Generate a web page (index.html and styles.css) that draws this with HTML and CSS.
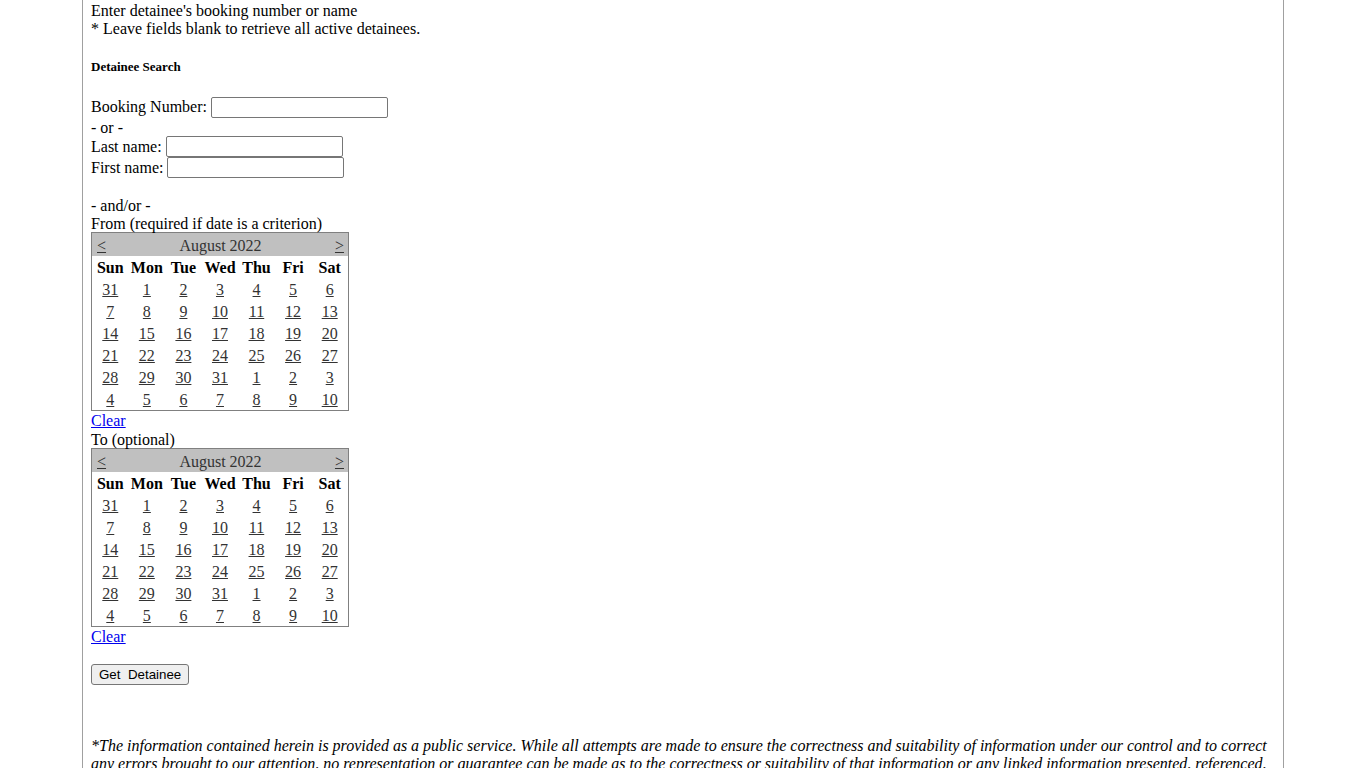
FILE: index.html
```html
<!DOCTYPE html>
<html>
<head>
<meta charset="utf-8">
<title>Detainee Search</title>
<link rel="stylesheet" href="styles.css">
</head>
<body>
<div class="page">
  <div class="intro">
    <div class="line">Enter detainee's booking number or name</div>
    <div class="line">* Leave fields blank to retrieve all active detainees.</div>
  </div>
  <h5 class="title">Detainee Search</h5>
  <form class="search">
    <div class="row row-booking">Booking Number:&nbsp;<input type="text" class="field"></div>
    <div class="line">- or -</div>
    <div class="row">Last name:&nbsp;<input type="text" class="field"></div>
    <div class="row">First name:&nbsp;<input type="text" class="field"></div>
    <div class="line"></div>
    <div class="line">- and/or -</div>
    <div class="line">From (required if date is a criterion)</div>
    <table class="cal">
      <tr class="cal-head"><td colspan="7"><div class="cal-nav"><a href="#">&lt;</a><span>August 2022</span><a href="#">&gt;</a></div></td></tr>
      <tr class="cal-days"><th>Sun</th><th>Mon</th><th>Tue</th><th>Wed</th><th>Thu</th><th>Fri</th><th>Sat</th></tr>
      <tr><td><a href="#">31</a></td><td><a href="#">1</a></td><td><a href="#">2</a></td><td><a href="#">3</a></td><td><a href="#">4</a></td><td><a href="#">5</a></td><td><a href="#">6</a></td></tr>
      <tr><td><a href="#">7</a></td><td><a href="#">8</a></td><td><a href="#">9</a></td><td><a href="#">10</a></td><td><a href="#">11</a></td><td><a href="#">12</a></td><td><a href="#">13</a></td></tr>
      <tr><td><a href="#">14</a></td><td><a href="#">15</a></td><td><a href="#">16</a></td><td><a href="#">17</a></td><td><a href="#">18</a></td><td><a href="#">19</a></td><td><a href="#">20</a></td></tr>
      <tr><td><a href="#">21</a></td><td><a href="#">22</a></td><td><a href="#">23</a></td><td><a href="#">24</a></td><td><a href="#">25</a></td><td><a href="#">26</a></td><td><a href="#">27</a></td></tr>
      <tr><td><a href="#">28</a></td><td><a href="#">29</a></td><td><a href="#">30</a></td><td><a href="#">31</a></td><td><a href="#">1</a></td><td><a href="#">2</a></td><td><a href="#">3</a></td></tr>
      <tr><td><a href="#">4</a></td><td><a href="#">5</a></td><td><a href="#">6</a></td><td><a href="#">7</a></td><td><a href="#">8</a></td><td><a href="#">9</a></td><td><a href="#">10</a></td></tr>
    </table>
    <div class="line"><a href="#" class="clear">Clear</a></div>
    <div class="line line-to">To (optional)</div>
    <table class="cal">
      <tr class="cal-head"><td colspan="7"><div class="cal-nav"><a href="#">&lt;</a><span>August 2022</span><a href="#">&gt;</a></div></td></tr>
      <tr class="cal-days"><th>Sun</th><th>Mon</th><th>Tue</th><th>Wed</th><th>Thu</th><th>Fri</th><th>Sat</th></tr>
      <tr><td><a href="#">31</a></td><td><a href="#">1</a></td><td><a href="#">2</a></td><td><a href="#">3</a></td><td><a href="#">4</a></td><td><a href="#">5</a></td><td><a href="#">6</a></td></tr>
      <tr><td><a href="#">7</a></td><td><a href="#">8</a></td><td><a href="#">9</a></td><td><a href="#">10</a></td><td><a href="#">11</a></td><td><a href="#">12</a></td><td><a href="#">13</a></td></tr>
      <tr><td><a href="#">14</a></td><td><a href="#">15</a></td><td><a href="#">16</a></td><td><a href="#">17</a></td><td><a href="#">18</a></td><td><a href="#">19</a></td><td><a href="#">20</a></td></tr>
      <tr><td><a href="#">21</a></td><td><a href="#">22</a></td><td><a href="#">23</a></td><td><a href="#">24</a></td><td><a href="#">25</a></td><td><a href="#">26</a></td><td><a href="#">27</a></td></tr>
      <tr><td><a href="#">28</a></td><td><a href="#">29</a></td><td><a href="#">30</a></td><td><a href="#">31</a></td><td><a href="#">1</a></td><td><a href="#">2</a></td><td><a href="#">3</a></td></tr>
      <tr><td><a href="#">4</a></td><td><a href="#">5</a></td><td><a href="#">6</a></td><td><a href="#">7</a></td><td><a href="#">8</a></td><td><a href="#">9</a></td><td><a href="#">10</a></td></tr>
    </table>
    <div class="line"><a href="#" class="clear">Clear</a></div>
    <div class="actions"><button type="button" class="btn">Get&nbsp; Detainee</button></div>
  </form>
  <p class="disclaimer">*The information contained herein is provided as a public service. While all attempts are made to ensure the correctness and suitability of information under our control and to correct any errors brought to our attention, no representation or guarantee can be made as to the correctness or suitability of that information or any linked information presented, referenced, or implied. All critical information should be independently verified.</p>
</div>
</body>
</html>
```

FILE: styles.css
```css
html, body {
  margin: 0;
  padding: 0;
  background: #fff;
}
body {
  font-family: "Liberation Serif", "Times New Roman", serif;
  font-size: 16px;
  color: #000;
  line-height: 18px;
}
.page {
  width: 1202px;
  box-sizing: border-box;
  margin: 0 auto;
  border-left: 1px solid #a0a0a0;
  border-right: 1px solid #a0a0a0;
  padding: 2px 8px 0 8px;
  min-height: 768px;
}
.intro .line {
  line-height: 18px;
}
.line {
  height: 18px;
  line-height: 20px;
  white-space: nowrap;
}
.line-to {
  height: 19px;
  line-height: 21px;
}
.title {
  font-size: 13px;
  line-height: 15px;
  font-weight: bold;
  margin: 21px 0 22px 0;
}
.search {
  margin: 0;
}
.row {
  display: flex;
  align-items: center;
  height: 21px;
  white-space: nowrap;
}
.row-booking {
  height: 22px;
}
.field {
  box-sizing: border-box;
  width: 177px;
  height: 21px;
  margin: 0;
  padding: 1px 2px;
  border: 1px solid #767676;
  border-radius: 2px;
  font-family: "Liberation Sans", Arial, sans-serif;
  font-size: 13px;
  background: #fff;
}
.cal {
  width: 258px;
  table-layout: fixed;
  border: 1px solid #808080;
  border-collapse: separate;
  border-spacing: 0;
  color: #333;
}
.cal td, .cal th {
  padding: 2px 0 0 0;
  text-align: center;
  height: 20px;
  line-height: 18px;
}
.cal-head td {
  background: #c0c0c0;
  height: 21px;
}
.cal-nav {
  display: flex;
  justify-content: space-between;
  align-items: center;
  padding: 0 4px 0 5px;
}
.cal-nav a, .cal td a {
  color: #333;
  text-decoration: underline;
}
.cal-days th {
  font-weight: bold;
  color: #000;
}
.clear {
  color: #0000ee;
  text-decoration: underline;
}
.actions {
  margin-top: 19px;
  height: 21px;
}
.btn {
  box-sizing: border-box;
  height: 21px;
  padding: 1px 7px;
  margin: 0;
  font-family: "Liberation Sans", Arial, sans-serif;
  font-size: 13.33px;
  color: #000;
  background: #efefef;
  border: 1px solid #767676;
  border-radius: 3px;
}
.disclaimer {
  margin: 52px 0 0 0;
  font-style: italic;
  line-height: 18px;
}
```
